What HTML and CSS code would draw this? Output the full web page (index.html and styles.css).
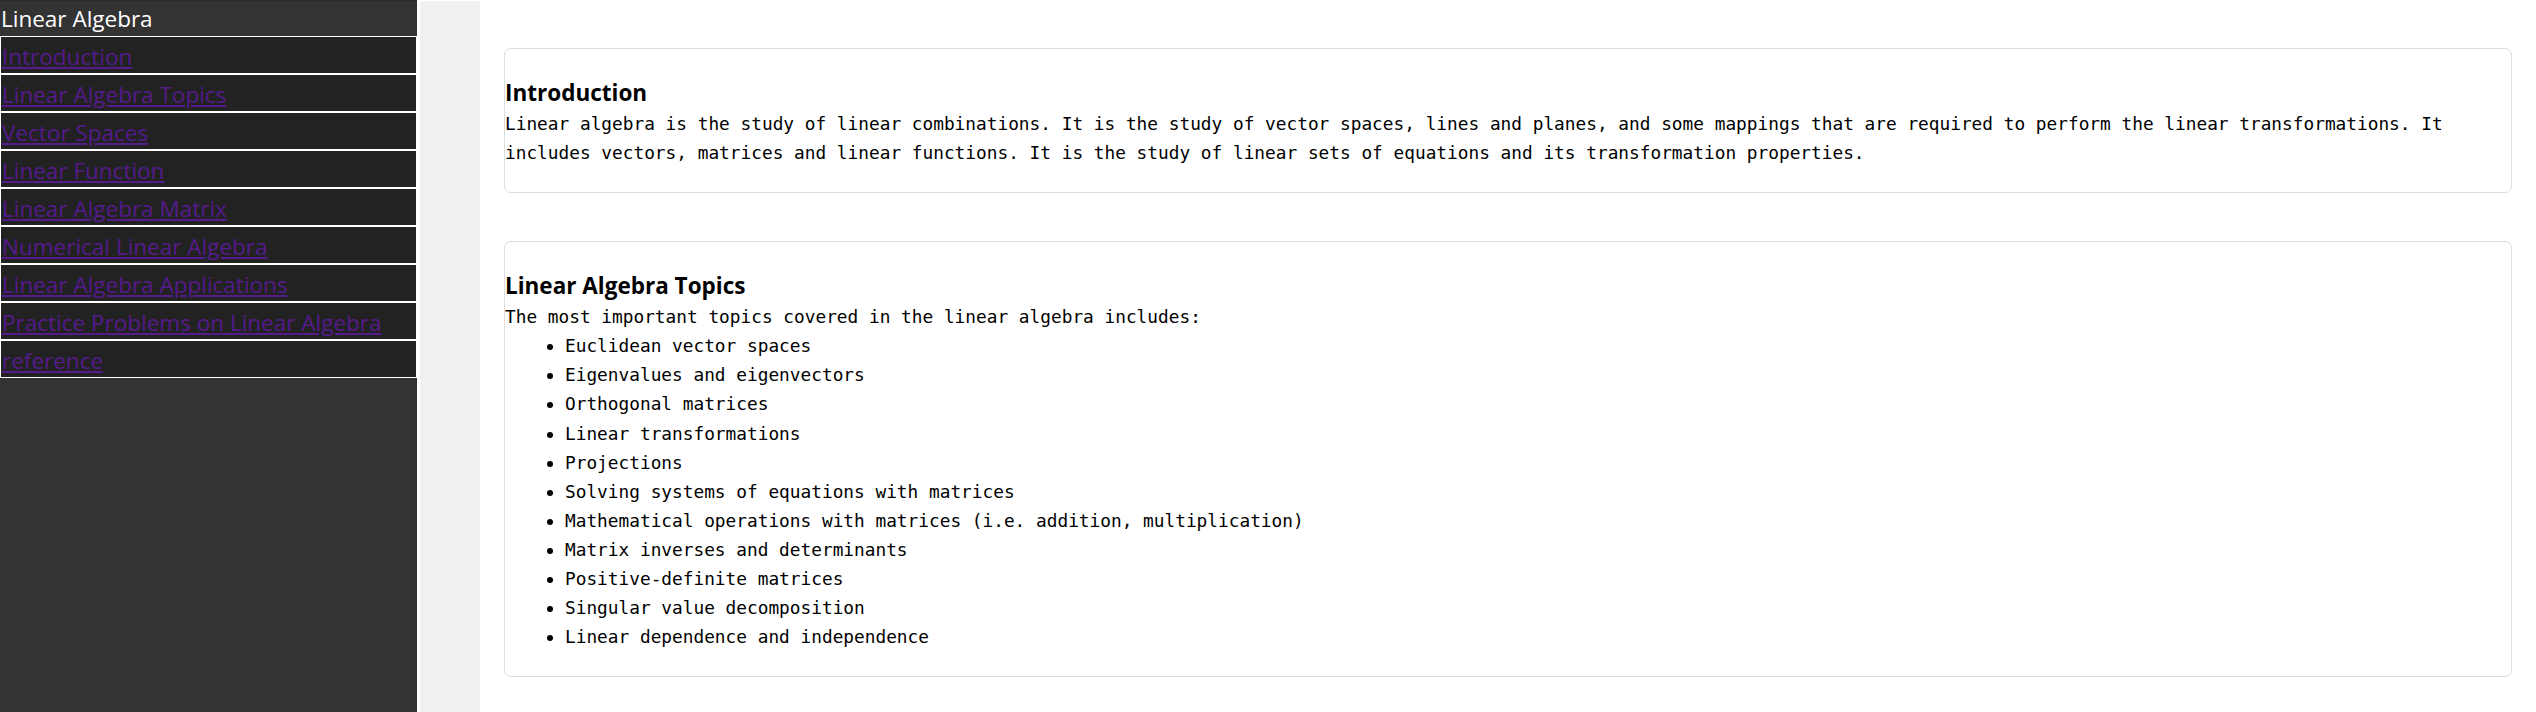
FILE: index.html
```html
<!DOCTYPE html>
<html lang="en">
<head>
<meta charset="utf-8">
<title>Linear Algebra</title>
<link rel="stylesheet" href="styles.css">
</head>
<body>
<div class="layout">
  <nav class="sidebar">
    <div class="side-title">Linear Algebra</div>
    <ul class="side-links">
      <li><a href="#introduction">Introduction</a></li>
      <li><a href="#topics">Linear Algebra Topics</a></li>
      <li><a href="#vector-spaces">Vector Spaces</a></li>
      <li><a href="#linear-function">Linear Function</a></li>
      <li><a href="#matrix">Linear Algebra Matrix</a></li>
      <li><a href="#numerical">Numerical Linear Algebra</a></li>
      <li><a href="#applications">Linear Algebra Applications</a></li>
      <li><a href="#practice">Practice Problems on Linear Algebra</a></li>
      <li><a href="#reference">reference</a></li>
    </ul>
  </nav>
  <div class="gutter"></div>
  <main class="content">
    <section class="card" id="introduction">
      <h3 class="card-title">Introduction</h3>
      <p class="card-text">Linear algebra is the study of linear combinations. It is the study of vector spaces, lines and planes, and some mappings that are required to perform the linear transformations. It includes vectors, matrices and linear functions. It is the study of linear sets of equations and its transformation properties.</p>
    </section>
    <section class="card" id="topics">
      <h3 class="card-title">Linear Algebra Topics</h3>
      <p class="card-text">The most important topics covered in the linear algebra includes:</p>
      <ul class="topic-list">
        <li>Euclidean vector spaces</li>
        <li>Eigenvalues and eigenvectors</li>
        <li>Orthogonal matrices</li>
        <li>Linear transformations</li>
        <li>Projections</li>
        <li>Solving systems of equations with matrices</li>
        <li>Mathematical operations with matrices (i.e. addition, multiplication)</li>
        <li>Matrix inverses and determinants</li>
        <li>Positive-definite matrices</li>
        <li>Singular value decomposition</li>
        <li>Linear dependence and independence</li>
      </ul>
    </section>
  </main>
</div>
</body>
</html>
```

FILE: styles.css
```css
html, body {
  margin: 0;
  padding: 0;
  background: #ffffff;
}

body {
  font-family: "Open Sans", "Noto Sans", sans-serif;
}

.layout {
  display: flex;
  align-items: stretch;
  min-height: 712px;
}

.sidebar {
  width: 417px;
  flex: 0 0 417px;
  background: #333333;
  border-top: 1px solid #2a2a2a;
  box-sizing: border-box;
}

.side-title {
  color: #ffffff;
  font-size: 22.5px;
  line-height: 35px;
  height: 35px;
  padding-left: 1px;
}

.side-links {
  list-style: none;
  margin: 0;
  padding: 0;
}

.side-links li {
  background: #222222;
  border: 1px solid #ffffff;
  height: 36px;
  box-sizing: content-box;
  width: 415px;
}

.side-links a {
  display: block;
  color: #551a8b;
  font-size: 22.5px;
  line-height: 32px;
  padding-top: 4px;
  padding-left: 1px;
  text-decoration: underline;
}

.gutter {
  width: 60px;
  flex: 0 0 60px;
  margin-left: 3px;
  background: #f1f1f1;
  border-top: 1px solid #ffffff;
}

.content {
  flex: 1;
  display: flex;
  flex-direction: column;
  gap: 48px;
  padding: 48px 24px 0 24px;
}

.card {
  border: 1px solid #dddddd;
  border-radius: 7px;
  padding: 27px 0 25px 0;
}

.card-title {
  margin: 0;
  font-family: "Open Sans", "Noto Sans", sans-serif;
  font-weight: 700;
  font-size: 22.5px;
  line-height: 33px;
  color: #000000;
}

.card-text {
  margin: 0;
  font-family: "DejaVu Sans Mono", "Liberation Mono", monospace;
  font-size: 17.8px;
  line-height: 29.1px;
  color: #000000;
}

.topic-list {
  margin: 0;
  padding-left: 60px;
  font-family: "DejaVu Sans Mono", "Liberation Mono", monospace;
  font-size: 17.8px;
  line-height: 29.1px;
  color: #000000;
}
```
